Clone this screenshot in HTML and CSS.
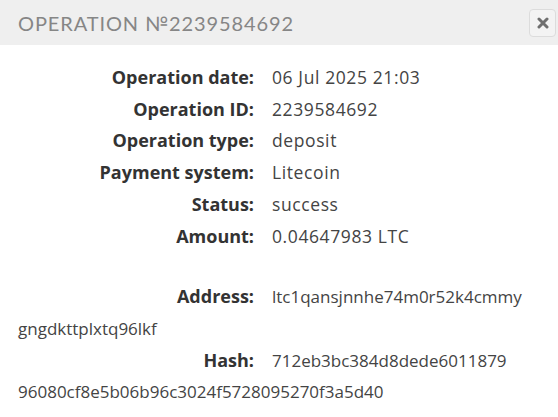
FILE: index.html
```html
<!DOCTYPE html>
<html lang="en">

<head>
    <meta charset="UTF-8">
    <meta name="viewport" content="width=device-width, initial-scale=1.0">
    <title>Operation</title>
    <link rel="stylesheet" href="styles.css">
</head>

<body>
    <div class="modal">
        <div class="modal-header">
            <h1 class="modal-title">Operation №2239584692</h1>
            <button class="close-btn" aria-label="Close">
                <svg width="12" height="12" viewBox="0 0 12 12">
                    <path d="M2 2 L10 10 M10 2 L2 10" stroke="#6f6f6f" stroke-width="3" stroke-linecap="round"/>
                </svg>
            </button>
        </div>
        <div class="modal-body">
            <p class="row"><span class="label">Operation date:</span>06 Jul 2025 21:03</p>
            <p class="row"><span class="label">Operation ID:</span>2239584692</p>
            <p class="row"><span class="label">Operation type:</span>deposit</p>
            <p class="row"><span class="label">Payment system:</span>Litecoin</p>
            <p class="row"><span class="label">Status:</span>success</p>
            <p class="row"><span class="label">Amount:</span>0.04647983 LTC</p>
            <div class="spacer"></div>
            <p class="row long"><span class="label">Address:</span>ltc1qansjnnhe74m0r52k4cmmy<wbr>gngdkttplxtq96lkf</p>
            <p class="row long"><span class="label">Hash:</span>712eb3bc384d8dede6011879<wbr>96080cf8e5b06b96c3024f5728095270f3a5d40</p>
        </div>
    </div>
</body>

</html>
```

FILE: styles.css
```css
body, html {
    margin: 0;
    padding: 0;
    background: #fff;
    font-family: 'Open Sans', sans-serif;
}

.modal {
    width: 558px;
}

.modal-header {
    display: flex;
    align-items: center;
    justify-content: space-between;
    height: 45px;
    padding: 0 2px 0 18px;
    background: #efefef;
}

.modal-title {
    margin: 0;
    font-family: Lato, sans-serif;
    font-size: 20px;
    font-weight: 400;
    letter-spacing: 0.9px;
    text-transform: uppercase;
    color: #868686;
}

.close-btn {
    display: flex;
    align-items: center;
    justify-content: center;
    width: 27px;
    height: 28px;
    padding: 0;
    border: 1px solid #dcdcdc;
    border-radius: 4px;
    background: #f3f3f3;
    cursor: pointer;
}

.modal-body {
    padding: 17px 18px 0;
}

.row {
    margin: 0;
    font-size: 17.5px;
    line-height: 31.7px;
    letter-spacing: 0.6px;
    color: #444;
    overflow-wrap: anywhere;
}

.long {
    font-size: 17px;
    letter-spacing: 0;
}

.label {
    display: inline-block;
    width: 236px;
    margin-right: 18px;
    text-align: right;
    font-size: 18px;
    font-weight: 700;
    letter-spacing: 0;
    color: #333;
}

.spacer {
    height: 29px;
}
```
